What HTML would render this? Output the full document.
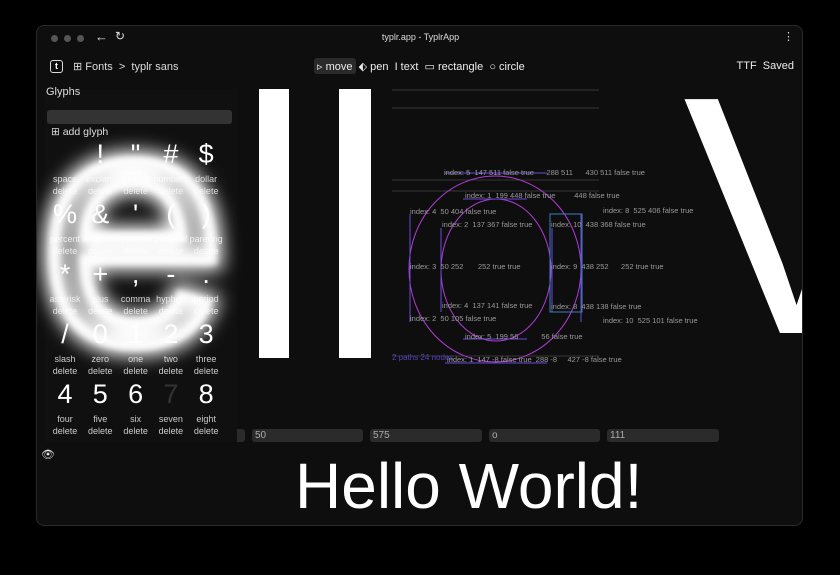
<!DOCTYPE html>
<html><head><style>
body{margin:0;width:840px;height:575px;background:#000;overflow:hidden;font-family:"Liberation Sans",sans-serif;color:#fff;position:relative}
.win{position:absolute;left:36px;top:25px;width:767px;height:501px;background:#0e0e0e;border-radius:8px;overflow:hidden;border:1px solid #2a2a2a;box-sizing:border-box}
.abs{position:absolute}
.dot{position:absolute;top:9px;width:7px;height:7px;border-radius:50%;background:#555}
.cell{position:absolute;width:36px;text-align:center;font-size:9px;color:#ccc;line-height:12px}
.cell b{display:block;font-weight:normal;font-size:27px;line-height:34px;color:#fff;height:36px}
.inp{position:absolute;top:403px;height:13px;background:#2b2b2b;border-radius:3px;font-size:10px;color:#aaa;line-height:13px;padding-left:3px;box-sizing:border-box}
.lbl{position:absolute;font-size:7.5px;color:#999;white-space:nowrap}
</style></head><body>
<div class="win">
 <div class="dot" style="left:14px"></div><div class="dot" style="left:27px"></div><div class="dot" style="left:40px"></div>
 <div class="abs" style="left:58px;top:3px;font-size:13px;color:#ddd">←</div>
 <div class="abs" style="left:78px;top:3px;font-size:12px;color:#ddd">↻</div>
 <div class="abs" style="left:0;width:767px;top:6px;text-align:center;font-size:9px;color:#ddd">typlr.app - TyplrApp</div>
 <div class="abs" style="right:8px;top:4px;font-size:11px;color:#ddd">⋮</div>
 <div class="abs" style="left:13px;top:34px;width:11px;height:11px;border:1.3px solid #ddd;border-radius:3px;font-size:9px;line-height:11px;text-align:center;font-weight:bold">t</div>
 <div class="abs" style="left:36px;top:34px;font-size:11px;color:#ddd">⊞ Fonts &nbsp;&gt;&nbsp; typlr sans</div>
 <div class="abs" style="left:277px;top:32px;width:42px;height:16px;background:#2a2a2a;border-radius:3px"></div>
 <div class="abs" style="left:280px;top:34px;font-size:11px;color:#eee;white-space:nowrap">▹ move &nbsp;⬖ pen &nbsp;I text &nbsp;▭ rectangle &nbsp;○ circle</div>
 <div class="abs" style="right:8px;top:34px;font-size:11px;color:#eee">TTF &nbsp;Saved</div>
 <!-- canvas -->
 <div class="abs" style="left:222px;top:63px;width:30px;height:269px;background:#fff"></div>
 <div class="abs" style="left:302px;top:63px;width:32px;height:269px;background:#fff"></div>
 <div class="abs" style="left:646px;top:20px;font-size:340px;line-height:340px;color:#fff">V</div>
 <svg class="abs" style="left:0;top:0" width="767" height="501">
  <g stroke="#444" stroke-width="0.8" fill="none">
   <line x1="355" y1="64" x2="562" y2="64"/><line x1="355" y1="82" x2="562" y2="82"/><line x1="355" y1="154" x2="562" y2="154"/><line x1="355" y1="165" x2="562" y2="165"/><line x1="355" y1="330" x2="562" y2="330"/>
  </g>
  <ellipse cx="458" cy="243" rx="86" ry="93" fill="none" stroke="#b23cd6" stroke-width="1"/>
  <ellipse cx="459" cy="244" rx="55" ry="71" fill="none" stroke="#b23cd6" stroke-width="1"/>
  <g stroke="#6b4ad8" stroke-width="1" fill="none">
   <line x1="373" y1="188" x2="373" y2="296"/><line x1="404" y1="202" x2="404" y2="286"/>
   <line x1="408" y1="147" x2="510" y2="147"/><line x1="426" y1="173" x2="490" y2="173"/>
   <line x1="426" y1="313" x2="490" y2="313"/><line x1="408" y1="337" x2="510" y2="337"/>
   <line x1="515" y1="202" x2="515" y2="286"/><line x1="544" y1="188" x2="544" y2="296"/>
  </g>
  <rect x="513" y="188" width="32" height="98" fill="none" stroke="#3a7fc0"/>
 </svg>
 <div class="lbl" style="left:407px;top:142px">index: 5 &nbsp;147 511 false true &nbsp;&nbsp;&nbsp;&nbsp;&nbsp;288 511 &nbsp;&nbsp;&nbsp;&nbsp;&nbsp;430 511 false true</div>
 <div class="lbl" style="left:428px;top:165px">index: 1 &nbsp;199 448 false true &nbsp;&nbsp;&nbsp;&nbsp;&nbsp;&nbsp;&nbsp;&nbsp;448 false true</div>
 <div class="lbl" style="left:373px;top:181px">index: 4 &nbsp;50 404 false true</div>
 <div class="lbl" style="left:566px;top:180px">index: 8 &nbsp;525 406 false true</div>
 <div class="lbl" style="left:405px;top:194px">index: 2 &nbsp;137 367 false true</div>
 <div class="lbl" style="left:514px;top:194px">index: 10 &nbsp;438 368 false true</div>
 <div class="lbl" style="left:373px;top:236px">index: 3 &nbsp;50 252 &nbsp;&nbsp;&nbsp;&nbsp;&nbsp;&nbsp;252 true true</div>
 <div class="lbl" style="left:514px;top:236px">index: 9 &nbsp;438 252 &nbsp;&nbsp;&nbsp;&nbsp;&nbsp;252 true true</div>
 <div class="lbl" style="left:405px;top:275px">index: 4 &nbsp;137 141 false true</div>
 <div class="lbl" style="left:514px;top:276px">index: 8 &nbsp;438 138 false true</div>
 <div class="lbl" style="left:373px;top:288px">index: 2 &nbsp;50 105 false true</div>
 <div class="lbl" style="left:566px;top:290px">index: 10 &nbsp;525 101 false true</div>
 <div class="lbl" style="left:428px;top:306px">index: 5 &nbsp;199 56 &nbsp;&nbsp;&nbsp;&nbsp;&nbsp;&nbsp;&nbsp;&nbsp;&nbsp;&nbsp;56 false true</div>
 <div class="lbl" style="left:355px;top:327px;color:#5a3fc0;font-size:8px">2 paths 24 nodes</div>
 <div class="lbl" style="left:410px;top:329px">index: 1 &nbsp;147 -8 false true &nbsp;288 -8 &nbsp;&nbsp;&nbsp;&nbsp;427 -8 false true</div>
 <div class="inp" style="left:90px;width:118px"></div>
 <div class="inp" style="left:215px;width:111px">50</div>
 <div class="inp" style="left:333px;width:112px">575</div>
 <div class="inp" style="left:452px;width:111px">o</div>
 <div class="inp" style="left:570px;width:112px">111</div>
 <div class="abs" style="left:4px;top:422px;font-size:11px;color:#ddd">👁︎</div>
 <div class="abs" style="left:258px;top:424px;font-size:64px;line-height:72px;color:#fff;white-space:nowrap">Hello World!</div>
 <!-- panel -->
 <div class="abs" style="left:8px;top:63px;width:192px;height:353px;background:#101010"></div>
 <div class="abs" style="left:9px;top:60px;font-size:11px;color:#ddd">Glyphs</div>
 <div class="abs" style="left:10px;top:84px;width:185px;height:14px;background:#333;border-radius:3px"></div>
 <div class="abs" style="left:14px;top:100px;font-size:10.5px;color:#ddd">⊞ add glyph</div>
 <div id="g"></div>
 <svg class="abs" style="left:0;top:0" width="280" height="380">
  <defs><filter id="bl" x="-30%" y="-30%" width="160%" height="160%"><feGaussianBlur stdDeviation="9"/></filter>
  <filter id="bl2" x="-30%" y="-30%" width="160%" height="160%"><feGaussianBlur stdDeviation="3"/></filter></defs>
  <text x="3" y="316" font-family="Liberation Sans" font-size="335" fill="none" stroke="#fff" stroke-width="22" filter="url(#bl)">e</text>
  <text x="3" y="316" font-family="Liberation Sans" font-size="335" fill="none" stroke="#fff" stroke-width="10" filter="url(#bl2)" opacity=".9">e</text>
 </svg>
</div>
<script>
var names=[["space","","exclam","!","quotedb","\"","numbers","#","dollar","$"],["percent","%","ampersa","&amp;","quotesin","'","parenlef","(","parenrig",")"],["asterisk","*","plus","+","comma",",","hyphen","-","period","."],["slash","/","zero","0","one","1","two","2","three","3"],["four","4","five","5","six","6","seven","7","eight","8"]];
var h="";for(var r=0;r<5;r++)for(var c=0;c<5;c++){var n=names[r][c*2],s=names[r][c*2+1];h+='<div class="cell" style="left:'+(10+c*35.3)+'px;top:'+(111+r*60)+'px"><b'+(s=="7"?' style="color:#333"':'')+'>'+s+'</b>'+n+'<br>delete</div>';}
document.getElementById('g').outerHTML=h;
</script>
</body></html>
